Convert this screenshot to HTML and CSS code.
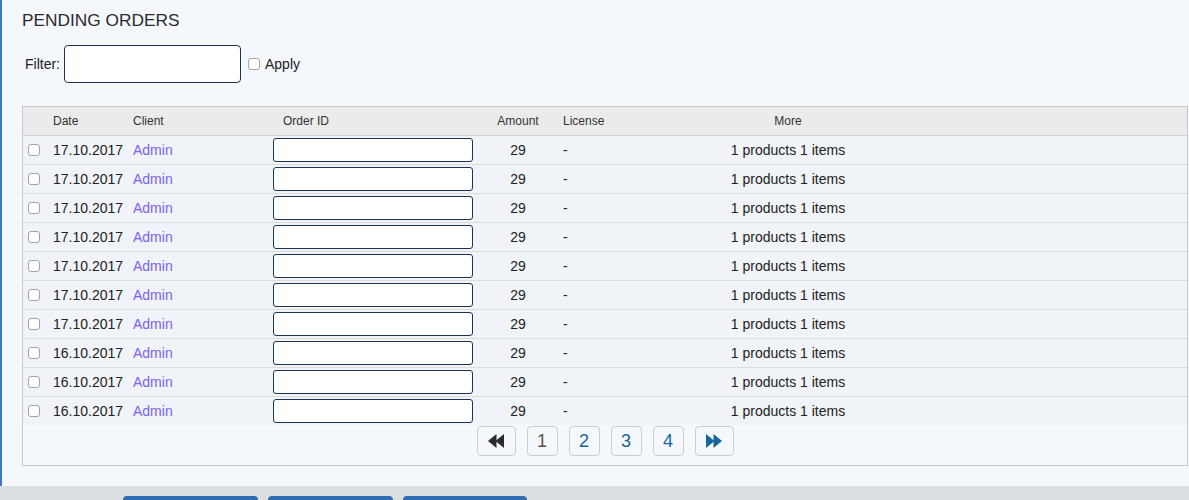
FILE: index.html
```html
<!DOCTYPE html>
<html>
<head>
<meta charset="utf-8">
<link rel="stylesheet" href="styles.css">
</head>
<body>
<div class="page">
  <h1 class="title">PENDING ORDERS</h1>
  <div class="filter">
    <label class="filter-label">Filter:</label>
    <input class="filter-input" type="text">
    <input class="check apply-check" type="checkbox">
    <span class="apply">Apply</span>
  </div>
  <div class="panel">
    <table class="orders">
      <colgroup>
        <col class="c-check"><col class="c-date"><col class="c-client"><col class="c-order"><col class="c-amount"><col class="c-license"><col class="c-more"><col>
      </colgroup>
      <thead>
        <tr><th></th><th>Date</th><th>Client</th><th class="h-order">Order ID</th><th class="center">Amount</th><th>License</th><th class="center">More</th><th></th></tr>
      </thead>
      <tbody>
        <tr><td><input class="check" type="checkbox"></td><td>17.10.2017</td><td><a class="link">Admin</a></td><td><input class="order-input" type="text"></td><td class="center">29</td><td>-</td><td class="center">1 products 1 items</td><td></td></tr>
        <tr><td><input class="check" type="checkbox"></td><td>17.10.2017</td><td><a class="link">Admin</a></td><td><input class="order-input" type="text"></td><td class="center">29</td><td>-</td><td class="center">1 products 1 items</td><td></td></tr>
        <tr><td><input class="check" type="checkbox"></td><td>17.10.2017</td><td><a class="link">Admin</a></td><td><input class="order-input" type="text"></td><td class="center">29</td><td>-</td><td class="center">1 products 1 items</td><td></td></tr>
        <tr><td><input class="check" type="checkbox"></td><td>17.10.2017</td><td><a class="link">Admin</a></td><td><input class="order-input" type="text"></td><td class="center">29</td><td>-</td><td class="center">1 products 1 items</td><td></td></tr>
        <tr><td><input class="check" type="checkbox"></td><td>17.10.2017</td><td><a class="link">Admin</a></td><td><input class="order-input" type="text"></td><td class="center">29</td><td>-</td><td class="center">1 products 1 items</td><td></td></tr>
        <tr><td><input class="check" type="checkbox"></td><td>17.10.2017</td><td><a class="link">Admin</a></td><td><input class="order-input" type="text"></td><td class="center">29</td><td>-</td><td class="center">1 products 1 items</td><td></td></tr>
        <tr><td><input class="check" type="checkbox"></td><td>17.10.2017</td><td><a class="link">Admin</a></td><td><input class="order-input" type="text"></td><td class="center">29</td><td>-</td><td class="center">1 products 1 items</td><td></td></tr>
        <tr><td><input class="check" type="checkbox"></td><td>16.10.2017</td><td><a class="link">Admin</a></td><td><input class="order-input" type="text"></td><td class="center">29</td><td>-</td><td class="center">1 products 1 items</td><td></td></tr>
        <tr><td><input class="check" type="checkbox"></td><td>16.10.2017</td><td><a class="link">Admin</a></td><td><input class="order-input" type="text"></td><td class="center">29</td><td>-</td><td class="center">1 products 1 items</td><td></td></tr>
        <tr><td><input class="check" type="checkbox"></td><td>16.10.2017</td><td><a class="link">Admin</a></td><td><input class="order-input" type="text"></td><td class="center">29</td><td>-</td><td class="center">1 products 1 items</td><td></td></tr>
      </tbody>
    </table>
    <div class="pager">
      <a class="pg pg-arrow"><svg width="16" height="14" viewBox="0 0 16 14"><polygon points="8.5,0 0,7 8.5,14" fill="#2a2a2a"/><polygon points="16,0 7.5,7 16,14" fill="#2a2a2a"/></svg></a>
      <a class="pg pg-current">1</a>
      <a class="pg">2</a>
      <a class="pg">3</a>
      <a class="pg">4</a>
      <a class="pg pg-arrow"><svg width="16" height="14" viewBox="0 0 16 14"><polygon points="0,0 8.5,7 0,14" fill="#17649e"/><polygon points="7.5,0 16,7 7.5,14" fill="#17649e"/></svg></a>
    </div>
  </div>
</div>
<div class="footer">
  <span class="fbtn fbtn-1"></span>
  <span class="fbtn fbtn-2"></span>
  <span class="fbtn fbtn-3"></span>
</div>
</body>
</html>
```

FILE: styles.css
```css
html, body {
  margin: 0;
  padding: 0;
}
body {
  font-family: "Liberation Sans", Arial, Helvetica, sans-serif;
  background: #f4f7fb;
  color: #222;
  overflow: hidden;
}
.page {
  border-left: 2px solid #3a7ac4;
  padding: 10px 1px 20px 20px;
  height: 456px;
}
.title {
  margin: 0;
  font-size: 17.3px;
  line-height: 20px;
  font-weight: normal;
  color: #2b2b2b;
}
.filter {
  display: flex;
  align-items: center;
  height: 38px;
  margin-top: 15px;
  font-size: 14px;
  color: #222;
}
.filter-label {
  margin-left: 3px;
  margin-right: 4px;
}
.filter-input {
  box-sizing: border-box;
  width: 177px;
  height: 38px;
  border: 1px solid #1c3554;
  border-radius: 4px;
  background: #fff;
  margin: 0;
}
.check {
  appearance: none;
  -webkit-appearance: none;
  box-sizing: border-box;
  width: 12px;
  height: 12px;
  margin: 0;
  border: 1px solid #a3a3a3;
  border-radius: 3px;
  background: #fff;
  display: block;
}
.apply-check {
  margin-left: 7px;
  margin-right: 5px;
}
.panel {
  margin-top: 23px;
  border: 1px solid #c9c9c9;
  background: #f4f7fb;
}
.orders {
  width: 100%;
  table-layout: fixed;
  border-collapse: separate;
  border-spacing: 0;
}
.c-check { width: 25px; }
.c-date { width: 80px; }
.c-client { width: 140px; }
.c-order { width: 210px; }
.c-amount { width: 80px; }
.c-license { width: 140px; }
.c-more { width: 180px; }
.orders th {
  height: 29px;
  padding: 0 5px;
  background: #ebebeb;
  border-bottom: 1px solid #d3d3d3;
  font-size: 12px;
  font-weight: normal;
  color: #333;
  text-align: left;
  box-sizing: border-box;
}
.orders th.h-order { padding-left: 15px; }
.orders td {
  height: 28px;
  padding: 0 5px;
  font-size: 14px;
  color: #222;
  background: #f0f3f7;
  vertical-align: middle;
  white-space: nowrap;
}
.orders tbody tr + tr td {
  border-top: 1px solid #dcdcdc;
}
.orders .center { text-align: center; }
.link {
  color: #7b62f2;
  text-decoration: none;
}
.order-input {
  box-sizing: border-box;
  display: block;
  width: 200px;
  height: 24px;
  margin: 0;
  border: 1px solid #1c3554;
  border-radius: 3px;
  background: #fff;
}
.pager {
  display: flex;
  justify-content: center;
  gap: 11px;
  padding: 1px 0 9px;
}
.pg {
  box-sizing: border-box;
  width: 31px;
  height: 30px;
  display: flex;
  align-items: center;
  justify-content: center;
  border: 1px solid #cdcdcd;
  border-radius: 4px;
  background: #f4f7fb;
  font-size: 18px;
  color: #17649e;
}
.pg-current { color: #555; }
.pg-arrow { width: 39px; }
.footer {
  height: 14px;
  overflow: hidden;
  background: #dcdfe2;
  display: flex;
  gap: 10px;
  padding: 10px 0 0 123px;
  box-sizing: border-box;
}
.fbtn {
  display: block;
  height: 34px;
  background: #2f6db4;
  border-radius: 4px;
}
.fbtn-1 { width: 135px; }
.fbtn-2 { width: 125px; }
.fbtn-3 { width: 124px; }
```
